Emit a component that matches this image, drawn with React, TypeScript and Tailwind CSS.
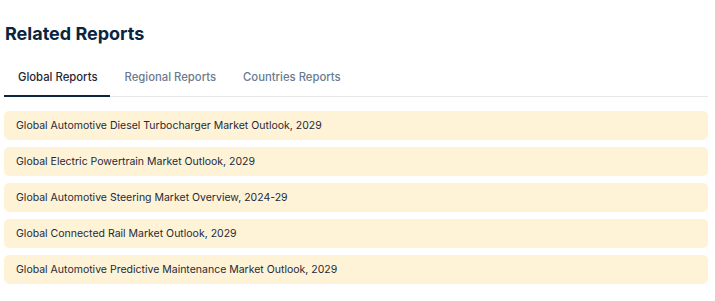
const reports = [
  "Global Automotive Diesel Turbocharger Market Outlook, 2029",
  "Global Electric Powertrain Market Outlook, 2029",
  "Global Automotive Steering Market Overview, 2024-29",
  "Global Connected Rail Market Outlook, 2029",
  "Global Automotive Predictive Maintenance Market Outlook, 2029",
];

const tabs = ["Global Reports", "Regional Reports", "Countries Reports"];

export default function App() {
  return (
    <div className="h-[301px] w-[715px] bg-white pl-1 pt-[22px] font-['Inter',sans-serif]">
      <h2 className="pl-px text-[18px] font-bold leading-[24px] text-[#0b2540]">Related Reports</h2>

      <div className="mt-[21px] flex w-[704px] border-b border-[#e5e7eb]">
        {tabs.map((tab, i) => (
          <button
            key={tab}
            type="button"
            className={`-mb-px pb-[10px] pl-[14px] pr-[13px] pt-[2px] text-[11.3px] font-medium leading-[16px] ${
              i === 0 ? "border-b-2 border-[#0b2540] text-[#1f2937]" : "border-b-2 border-transparent text-[#6b7a90]"
            }`}
          >
            {tab}
          </button>
        ))}
      </div>

      <div className="mt-[14px] flex w-[704px] flex-col gap-[7px]">
        {reports.map((r) => (
          <div
            key={r}
            className="flex h-[29px] items-center rounded-[5px] bg-[#fef3d7] px-3 text-[10.5px] text-[#1f2937]"
          >
            {r}
          </div>
        ))}
      </div>
    </div>
  );
}
